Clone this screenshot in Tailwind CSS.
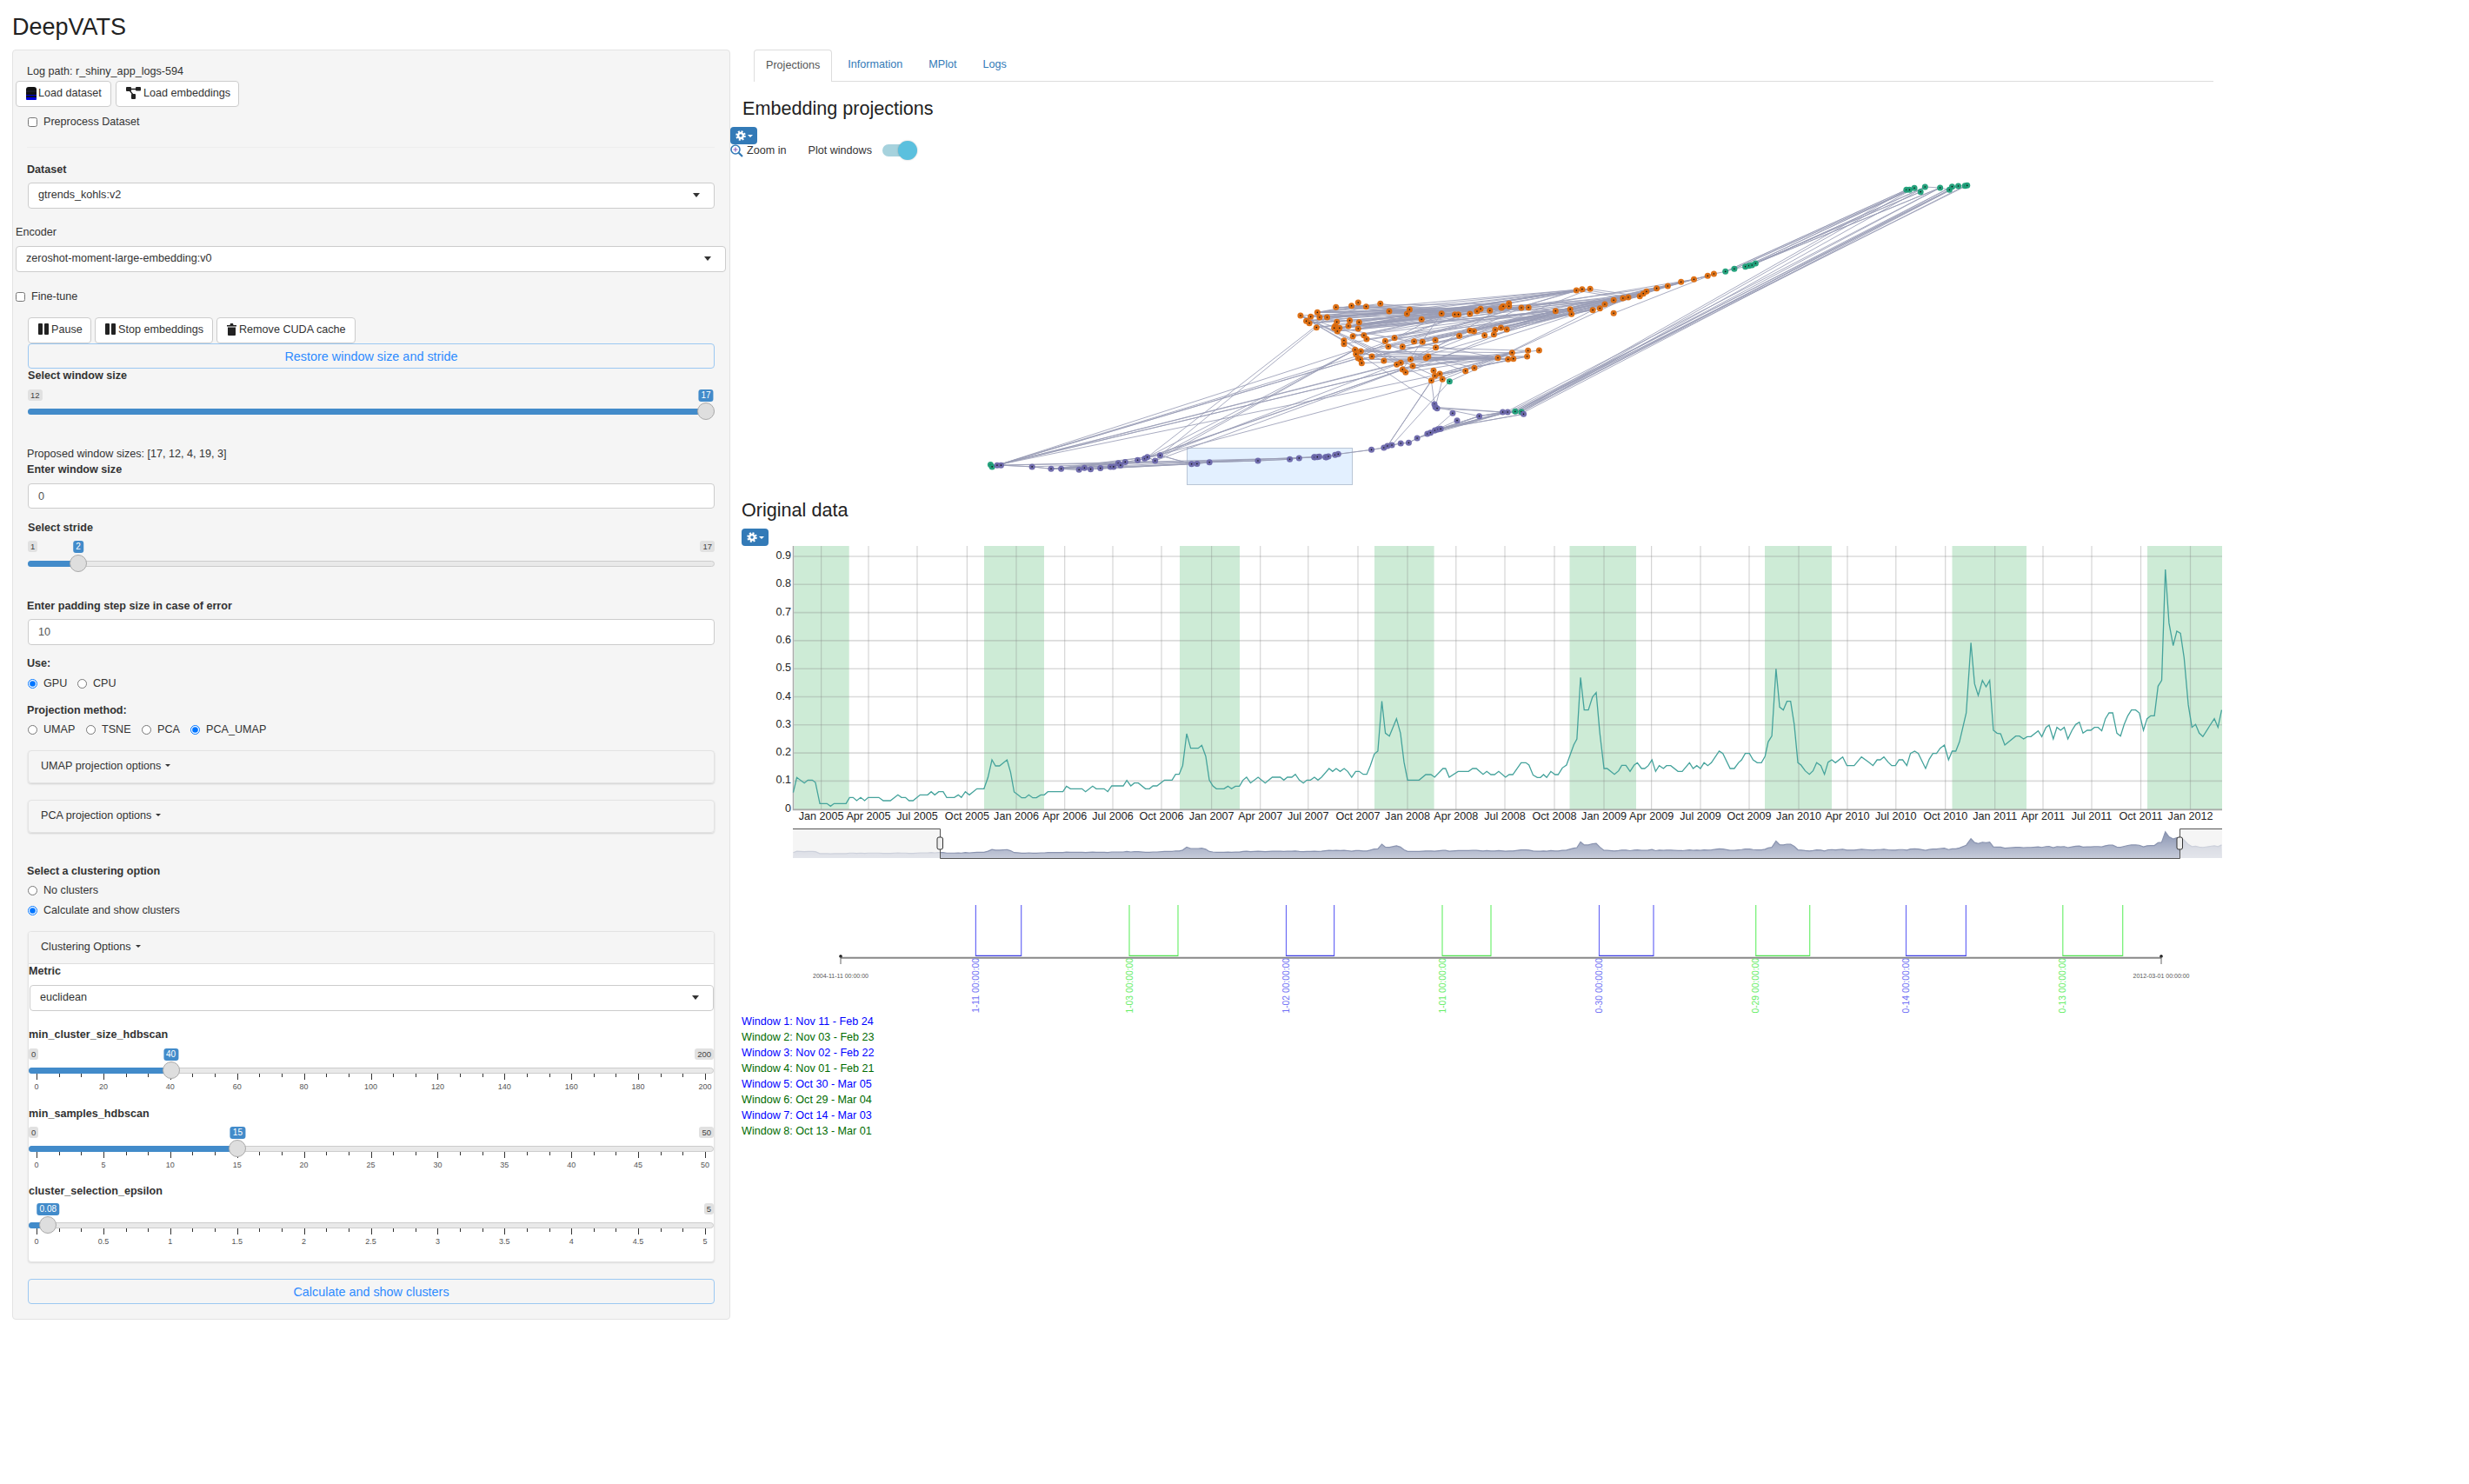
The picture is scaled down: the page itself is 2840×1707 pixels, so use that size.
<!DOCTYPE html>
<html lang="en">
<head>
  <meta charset="UTF-8" />
  <title>DeepVATS</title>
  <script src="https://cdn.jsdelivr.net/npm/@tailwindcss/browser@4"></script>
</head>
<body class="bg-white text-[#333] text-[12.6px] leading-[16px] [font-family:'Liberation_Sans',sans-serif]">
  <h2 class="h-[57px] pl-[14px] pt-[16px] text-[27px] leading-[30px] text-[#222]">DeepVATS</h2>

  <div class="flex items-start">
    <!-- sidebar -->
    <aside class="ml-[14px] h-[1461px] w-[826px] shrink-0 rounded border border-[#e3e3e3] bg-[#f5f5f5]">
      <div class="ml-[16px] mt-[16px] h-[16px]">Log path: r_shiny_app_logs-594</div>
      <div class="ml-[3px] mt-[3px] flex gap-[5px]">
        <button class="flex h-[30px] w-[110px] items-center gap-[2px] rounded border border-[#ccc] bg-white pb-[2px] pl-[11px]">
          <svg width="12" height="15" viewBox="0 0 12 15"><rect y="0" width="12" height="15" rx="3" fill="#111"/><rect y="4.5" width="12" height="1" fill="#224"/><rect y="9" width="12" height="1.2" fill="#00c"/><rect y="12" width="12" height="3" rx="1" fill="#00d"/></svg>
          Load dataset
        </button>
        <button class="flex h-[30px] w-[142px] items-center gap-[3px] rounded border border-[#ccc] bg-white pb-[2px] pl-[11px]">
          <svg width="17" height="14" viewBox="0 0 17 14"><path d="M3 2.5H13M3 2.5L8 9" stroke="#222" stroke-width="1.3" fill="none"/><rect width="6" height="5" rx="1" fill="#222"/><rect x="11" width="6" height="4.5" rx="1" fill="#222"/><rect x="6" y="8" width="5" height="6" rx="1" fill="#222"/></svg>
          Load embeddings
        </button>
      </div>
      <label class="ml-[17px] mt-[9px] flex h-[16px] items-center gap-[7px]"><input type="checkbox" class="h-[11px] w-[11px]" />Preprocess Dataset</label>
      <hr class="ml-[16px] mt-[21px] w-[791px] border-[#eee]" />

      <div class="ml-[16px] mt-[17px] h-[16px] font-bold">Dataset</div>
      <div class="ml-[17px] mt-[7px] flex h-[30px] w-[790px] items-center justify-between rounded border border-[#ccc] bg-white pb-[2px] pl-[11px] pr-[16px]">gtrends_kohls:v2<span class="h-0 w-0 border-x-4 border-t-[5px] border-x-transparent border-t-[#333]"></span></div>

      <div class="ml-[3px] mt-[19px] h-[16px]">Encoder</div>
      <div class="ml-[3px] mt-[8px] flex h-[30px] w-[817px] items-center justify-between rounded border border-[#ccc] bg-white pb-[2px] pl-[11px] pr-[16px]">zeroshot-moment-large-embedding:v0<span class="h-0 w-0 border-x-4 border-t-[5px] border-x-transparent border-t-[#333]"></span></div>

      <label class="ml-[3px] mt-[20px] flex h-[16px] items-center gap-[7px]"><input type="checkbox" class="h-[11px] w-[11px]" />Fine-tune</label>

      <div class="ml-[17px] mt-[16px] flex gap-[4px]">
        <button class="flex h-[30px] w-[73px] items-center gap-[3px] rounded border border-[#ccc] bg-white pb-[3px] pl-[11px]">
          <svg width="12" height="13" viewBox="0 0 12 13"><rect width="5" height="13" rx="1" fill="#222"/><rect x="7" width="5" height="13" rx="1" fill="#222"/></svg>
          Pause
        </button>
        <button class="flex h-[30px] w-[136px] items-center gap-[3px] rounded border border-[#ccc] bg-white pb-[3px] pl-[11px]">
          <svg width="12" height="13" viewBox="0 0 12 13"><rect width="5" height="13" rx="1" fill="#222"/><rect x="7" width="5" height="13" rx="1" fill="#222"/></svg>
          Stop embeddings
        </button>
        <button class="flex h-[30px] w-[160px] items-center gap-[3px] rounded border border-[#ccc] bg-white pb-[3px] pl-[11px]">
          <svg width="11" height="14" viewBox="0 0 11 14"><path d="M0 2H3.5L4 0H7L7.5 2H11V3.5H0Z" fill="#222"/><path d="M1 4.5H10V13A1 1 0 0 1 9 14H2A1 1 0 0 1 1 13Z" fill="#222"/></svg>
          Remove CUDA cache
        </button>
      </div>
      <button class="ml-[17px] block h-[29px] w-[790px] rounded border border-[#9cc8f2] text-[14.4px] text-[#2e8bff]">Restore window size and stride</button>
      <div class="ml-[17px] h-[16px] font-bold">Select window size</div>

      <div class="slider ml-[17px] mt-[8px] h-[66px] w-[790px]" data-w="790" data-min="12" data-max="17" data-value="17" data-pct="1" data-hide-hi="1"></div>
      <div class="ml-[16px] h-[16px]">Proposed window sizes: [17, 12, 4, 19, 3]</div>
      <div class="ml-[16px] mt-[2px] h-[16px] font-bold">Enter window size</div>
      <input class="ml-[17px] mt-[8px] block h-[29px] w-[790px] rounded border border-[#ccc] bg-white pl-[11px] text-[#555]" value="0" />

      <div class="ml-[17px] mt-[14px] h-[16px] font-bold">Select stride</div>
      <div class="slider ml-[17px] mt-[7px] h-[67px] w-[790px]" data-w="790" data-min="1" data-max="17" data-value="2" data-pct="0.0625" data-track="23"></div>
      <div class="ml-[16px] h-[16px] font-bold">Enter padding step size in case of error</div>
      <input class="ml-[17px] mt-[7px] block h-[30px] w-[790px] rounded border border-[#ccc] bg-white pl-[11px] text-[#555]" value="10" />

      <div class="ml-[16px] mt-[13px] h-[16px] font-bold">Use:</div>
      <div class="ml-[17px] mt-[7px] flex h-[16px] items-center">
        <label class="flex w-[57px] items-center gap-[7px]"><input type="radio" name="use" checked class="h-[11px] w-[11px]" />GPU</label>
        <label class="flex items-center gap-[7px]"><input type="radio" name="use" class="h-[11px] w-[11px]" />CPU</label>
      </div>
      <div class="ml-[16px] mt-[15px] h-[16px] font-bold">Projection method:</div>
      <div class="ml-[17px] mt-[6px] flex h-[16px] items-center">
        <label class="flex w-[67px] items-center gap-[7px]"><input type="radio" name="proj" class="h-[11px] w-[11px]" />UMAP</label>
        <label class="flex w-[64px] items-center gap-[7px]"><input type="radio" name="proj" class="h-[11px] w-[11px]" />TSNE</label>
        <label class="flex w-[56px] items-center gap-[7px]"><input type="radio" name="proj" class="h-[11px] w-[11px]" />PCA</label>
        <label class="flex items-center gap-[7px]"><input type="radio" name="proj" checked class="h-[11px] w-[11px]" />PCA_UMAP</label>
      </div>

      <div class="ml-[17px] mt-[16px] flex h-[38px] w-[790px] items-center gap-[5px] rounded border border-[#e3e3e3] pb-[3px] pl-[14px] shadow-[0_1px_2px_rgba(0,0,0,0.15)]">UMAP projection options<span class="h-0 w-0 border-x-[3px] border-t-[3px] border-x-transparent border-t-[#333]"></span></div>
      <div class="ml-[17px] mt-[19px] flex h-[38px] w-[790px] items-center gap-[5px] rounded border border-[#e3e3e3] pb-[3px] pl-[14px] shadow-[0_1px_2px_rgba(0,0,0,0.15)]">PCA projection options<span class="h-0 w-0 border-x-[3px] border-t-[3px] border-x-transparent border-t-[#333]"></span></div>

      <div class="ml-[16px] mt-[36px] h-[16px] font-bold">Select a clustering option</div>
      <label class="ml-[17px] mt-[6px] flex h-[16px] items-center gap-[7px]"><input type="radio" name="clu" class="h-[11px] w-[11px]" />No clusters</label>
      <label class="ml-[17px] mt-[7px] flex h-[16px] items-center gap-[7px]"><input type="radio" name="clu" checked class="h-[11px] w-[11px]" />Calculate and show clusters</label>

      <div class="ml-[17px] mt-[16px] h-[381px] w-[790px] overflow-hidden rounded border border-[#e3e3e3] bg-white shadow-[0_1px_2px_rgba(0,0,0,0.1)]">
        <div class="flex h-[37px] items-center gap-[5px] border-b border-[#ddd] bg-[#f5f5f5] pb-[3px] pl-[14px]">Clustering Options<span class="h-0 w-0 border-x-[3px] border-t-[3px] border-x-transparent border-t-[#333]"></span></div>
        <div class="h-[16px] font-bold">Metric</div>
        <div class="ml-px mt-[8px] flex h-[30px] w-[787px] items-center justify-between rounded border border-[#ccc] bg-white pb-[2px] pl-[11px] pr-[16px]">euclidean<span class="h-0 w-0 border-x-4 border-t-[5px] border-x-transparent border-t-[#333]"></span></div>
        <div class="mt-[19px] h-[16px] font-bold">min_cluster_size_hdbscan</div>
        <div class="slider mt-[8px] h-[67px] w-[788px]" data-w="788" data-min="0" data-max="200" data-value="40" data-pct="0.2" data-step="20"></div>
        <div class="h-[16px] font-bold">min_samples_hdbscan</div>
        <div class="slider mt-[7px] h-[66px] w-[788px]" data-w="788" data-min="0" data-max="50" data-value="15" data-pct="0.3" data-step="5"></div>
        <div class="h-[16px] font-bold">cluster_selection_epsilon</div>
        <div class="slider mt-[6px] h-[60px] w-[788px]" data-w="788" data-min="0" data-max="5" data-value="0.08" data-pct="0.016" data-step="0.5" data-hide-lo="1"></div>
      </div>
      <button class="ml-[17px] mt-[19px] block h-[29px] w-[790px] rounded border border-[#9cc8f2] text-[14.4px] text-[#2e8bff]">Calculate and show clusters</button>
    </aside>

    <!-- main -->
    <main class="w-[1720px]">
      <ul class="ml-[27px] flex h-[37px] w-[1679px] gap-[2px] border-b border-[#ddd]">
        <li class="h-[37px] rounded-t border-x border-t border-[#ddd] bg-white px-[13px] pt-[9px] text-[#555]">Projections</li>
        <li class="ml-[2px] px-[14px] pt-[9px] text-[#337ab7]">Information</li>
        <li class="px-[14px] pt-[9px] text-[#337ab7]">MPlot</li>
        <li class="px-[14px] pt-[9px] text-[#337ab7]">Logs</li>
      </ul>

      <h3 class="ml-[14px] mt-[16px] h-[30px] text-[21.6px] leading-[30px] text-[#222]">Embedding projections</h3>
      <button class="mt-[6px] flex h-[20px] w-[31px] items-center justify-center gap-[2px] rounded-sm bg-[#337ab7]">
        <svg width="12" height="12" viewBox="0 0 12 12"><circle cx="6" cy="6" r="4.2" fill="#fff"/><circle cx="6" cy="6" r="4.8" fill="none" stroke="#fff" stroke-width="2" stroke-dasharray="2 1.77"/><circle cx="6" cy="6" r="1.7" fill="#337ab7"/></svg>
        <span class="h-0 w-0 border-x-[3px] border-t-[3px] border-x-transparent border-t-white"></span>
      </button>
      <div class="-mt-px flex h-[16px] items-center">
        <svg width="15" height="15" viewBox="0 0 15 15" class="shrink-0"><circle cx="6" cy="6" r="5" fill="#fff" stroke="#337ab7" stroke-width="1.6"/><path d="M9.7 9.7L14 14" stroke="#337ab7" stroke-width="2.2"/><path d="M3.5 6H8.5M6 3.5V8.5" stroke="#8a5fc0" stroke-width="1.2"/></svg>
        <span class="ml-[4px]">Zoom in</span>
        <span class="ml-[25px]">Plot windows</span>
        <span class="relative ml-[12px] block h-[14px] w-[30px] rounded-full bg-[#a6d2dd]">
          <span class="absolute left-[18px] top-[-4px] h-[22px] w-[22px] rounded-full bg-[#5bc0de] shadow-[0_0_2px_rgba(0,0,0,0.25)]"></span>
        </span>
      </div>
      <svg id="scatter" width="1720" height="389" viewBox="840 181 1720 389" class="block"></svg>

      <h3 class="ml-[13px] mt-[2px] h-[30px] text-[21.6px] leading-[30px] text-[#222]">Original data</h3>
      <button class="ml-[13px] mt-[6px] flex h-[20px] w-[31px] items-center justify-center gap-[2px] rounded-sm bg-[#337ab7]">
        <svg width="12" height="12" viewBox="0 0 12 12"><circle cx="6" cy="6" r="4.2" fill="#fff"/><circle cx="6" cy="6" r="4.8" fill="none" stroke="#fff" stroke-width="2" stroke-dasharray="2 1.77"/><circle cx="6" cy="6" r="1.7" fill="#337ab7"/></svg>
        <span class="h-0 w-0 border-x-[3px] border-t-[3px] border-x-transparent border-t-white"></span>
      </button>
      <svg id="chart" width="1720" height="362" viewBox="840 628 1720 362" class="block"></svg>

      <svg id="timeline" width="1720" height="124" viewBox="840 1041 1720 124" class="mt-[51px] block overflow-hidden"></svg>
      <div id="windows" class="ml-[13px] mt-px leading-[18px]"></div>
    </main>
  </div>

  <script>
    // sliders
    document.querySelectorAll('.slider').forEach(el => {
      const d = el.dataset;
      const w = Number(d.w);
      const cx = 10 + d.pct * (w - 20);
      const top = Number(d.track || 22);
      let html = '';
      if (!d.hideLo) html += `<span class="absolute left-0 top-0 rounded-[3px] bg-[#e1e1e1] px-[3px] text-[9.5px] leading-[13px] text-[#444]">${d.min}</span>`;
      if (!d.hideHi) html += `<span class="absolute right-0 top-0 rounded-[3px] bg-[#e1e1e1] px-[3px] text-[9.5px] leading-[13px] text-[#444]">${d.max}</span>`;
      html += `<span class="absolute top-0 z-10 -translate-x-1/2 rounded-[3px] bg-[#428bca] px-[3px] text-[10px] leading-[14px] text-white" style="left:${cx}px">${d.value}</span>`;
      html += `<span class="absolute inset-x-0 h-[7px] rounded border border-[#ccc] bg-[#e9e9e9]" style="top:${top}px"></span>`;
      html += `<span class="absolute left-0 h-[7px] rounded-l bg-[#428bca]" style="top:${top}px;width:${cx}px"></span>`;
      html += `<span class="absolute z-10 h-[20px] w-[20px] -translate-x-1/2 rounded-full border border-[#aaa] bg-[#dedede]" style="left:${cx}px;top:${top - 7}px"></span>`;
      if (d.step) {
        const n = 10;
        for (let i = 0; i <= n * 3; i++) {
          const x = 9 + i / (n * 3) * (w - 19);
          const major = i % 3 === 0;
          html += `<span class="absolute w-px bg-[#333]" style="left:${x}px;top:${top + 7}px;height:${major ? 7 : 4}px"></span>`;
          if (major) {
            const v = Math.round(i / 3 * d.step * 10) / 10;
            html += `<span class="absolute -translate-x-1/2 text-[9px] leading-[10px] text-[#555]" style="left:${x}px;top:${top + 17}px">${v}</span>`;
          }
        }
      }
      el.classList.add('relative');
      el.innerHTML = html;
    });

    // embedding projection
    const z5 = ([x, y]) => [1500 + x / 1.96, 180 + y / 3];
    const z4 = ([x, y]) => [830 + x / 2.24, 30 + y / 2.904];
    const orange = [[15,553],[30,538],[35,555],[52,555],[5,568],[12,575],[28,590],[72,520],[107,515],[122,504],[140,518],[172,508],[192,534],[238,528],[232,543],[265,562],[310,542],[340,545],[348,545],[374,543],[390,534],[398,526],[419,532],[445,522],[449,517],[462,507],[462,517],[490,522],[506,521],[614,462],[627,458],[645,457],[567,533],[600,527],[603,544],[651,530],[667,524],[678,510],[698,496],[719,489],[731,486],[757,482],[765,473],[772,466],[795,455],[820,447],[850,433],[879,424],[910,412],[924,405],[698,541],[74,571],[103,566],[124,572],[70,585],[68,592],[80,592],[75,603],[100,585],[122,594],[110,620],[135,617],[141,630],[90,635],[90,647],[183,637],[204,626],[190,656],[222,656],[248,638],[267,640],[296,634],[297,659],[350,619],[374,601],[383,603],[407,617],[428,614],[431,598],[444,591],[457,597],[115,667],[128,672],[117,682],[122,696],[127,700],[130,713],[153,690],[180,705],[209,718],[218,712],[240,700],[245,723],[222,735],[229,745],[275,695],[280,690],[292,739],[295,757],[306,750],[312,769],[287,773],[364,740],[384,730],[437,695],[469,677],[460,700],[472,698],[503,690],[505,670],[530,669],[-8,549]].map(z5);
    const tealTop = [[1358,115],[1365,115],[1376,109],[1390,122],[1400,105],[1434,108],[1455,115],[1461,104],[1475,102],[1490,101],[1495,100]].map(z5);
    const tealMid = [[950,397],[970,388],[995,380],[1003,377],[1010,375],[1018,369]].map(z5);
    const tealLow = [[328,776],[476,880],[490,881]].map(z5);
    const tealLeft = [[693,1465],[697,1472]].map(z4);
    const purpleA = [[710,1467],[720,1467],[800,1472],[849,1479],[875,1479],[921,1482],[935,1476],[951,1480],[976,1477],[1002,1472],[1010,1472],[1022,1460],[1028,1467],[1040,1456],[1072,1450],[1090,1445],[1097,1440],[1117,1452],[1130,1434],[1211,1463],[1225,1462],[1257,1457],[1382,1452],[1464,1447],[1488,1443],[1527,1440],[1540,1438],[1556,1440]].map(z4);
    const purpleB = [[24,1038],[30,1037],[50,1038],[55,1035],[70,1030],[77,1027],[152,1012],[180,1005],[188,999],[198,996],[218,990],[236,988],[255,972],[278,957],[285,953],[295,945],[302,941],[308,940],[395,896],[448,882],[459,882],[495,889]].map(z5);
    const purpleC = [[294,855],[296,865],[300,869],[335,886],[345,911]].map(z5);
    const purple = [...purpleA, ...purpleB, ...purpleC];

    let seed = 7;
    const rnd = n => { seed = (seed * 1103515245 + 12345) % 2147483648; return (seed >> 8) % n; };
    const lines = [];
    const seg = (a, b) => lines.push([a, b]);

    // long bands between the top teal group and the rest
    for (let i = 0; i < 12; i++) seg(tealTop[i % 6], tealMid[i % tealMid.length]);
    for (let i = 0; i < 10; i++) seg(tealTop[5 + i % 6], [1736 + i * 1.5, 472 + i % 5]);
    for (let i = 0; i < 3; i++) seg(tealTop[i * 2], [1742 + i * 3, 475]);
    for (let i = 0; i < tealTop.length - 1; i++) seg(tealTop[i], tealTop[i + 1]);

    // purple path along the bottom
    const chain = [...tealLeft, ...purple.slice(0, 50)];
    for (let i = 0; i < chain.length - 1; i++) { seg(chain[i], chain[i + 1]); seg(chain[i], chain[i + 1]); }
    for (let i = 0; i < 16; i++) seg(purpleA[rnd(8)], purpleA[10 + rnd(18)]);
    for (let i = 0; i < 10; i++) seg(purpleB[10 + rnd(9)], purpleB[17 + rnd(5)]);
    seg(purpleC[1], purpleB[19]); seg(purpleC[2], purpleB[19]); seg(purpleC[3], purpleB[14]); seg(purpleC[4], purpleB[15]);

    // left fan up to the orange cloud
    const fanFrom = [z4([715,1465]), z4([715,1465]), z4([715,1465]), z4([1097,1440]), z4([1130,1434]), z4([1117,1452]), z4([1090,1445])];
    const midOrange = orange.filter(p => p[1] > 395 && p[1] < 430);
    for (let i = 0; i < 9; i++) seg(fanFrom[i % 3], midOrange[rnd(midOrange.length)]);
    for (let i = 0; i < 8; i++) seg(fanFrom[3 + i % 4], orange[81 + rnd(20)]);
    seg(fanFrom[3], orange[3]); seg(fanFrom[4], orange[6]);

    // orange cloud
    const left = orange.filter(p => p[0] < 1640);
    const right = orange.filter(p => p[0] >= 1640 && p[0] < 1900 && p[1] < 365);
    for (let i = 0; i < 42; i++) seg(left[rnd(left.length)], right[rnd(right.length)]);
    for (let i = 0; i < 24; i++) seg(orange[rnd(9)], orange[7 + rnd(25)]);
    for (let i = 0; i < 30; i++) seg(orange[51 + rnd(30)], orange[29 + rnd(20)]);
    for (let i = 0; i < 30; i++) seg(orange[81 + rnd(22)], orange[103 + rnd(9)]);
    for (let i = 0; i < 14; i++) seg(orange[rnd(orange.length)], orange[rnd(orange.length)]);
    for (let i = 38; i < 50; i++) { seg(orange[i], orange[i + 1]); seg(orange[i], orange[i - 10]); }
    seg(orange[49], tealMid[0]); seg(tealMid[0], tealMid[1]); seg(tealMid[1], tealMid[2]);
    seg(orange[101], purpleC[0]); seg(orange[101], purpleB[8]); seg(orange[98], purpleB[8]);
    seg(tealLow[0], purpleB[9]); seg(orange[99], tealLow[0]); seg(orange[64], purpleC[0]);
    seg(purpleC[1], purpleB[18]); seg(orange[100], purpleC[1]); seg(tealLow[0], orange[105]);
    seg(purpleB[19], tealLow[1]); seg(tealLow[1], tealLow[2]);

    let s = `<rect x="1365.5" y="515.5" width="190" height="42" fill="#e3f0ff" stroke="#b9c5d5"/>`;
    s += lines.map(([a, b]) => `<line x1="${a[0]}" y1="${a[1]}" x2="${b[0]}" y2="${b[1]}" stroke="#9a9eb6" stroke-opacity=".85"/>`).join('');
    const dots = (arr, col) => arr.map(p => `<circle cx="${p[0]}" cy="${p[1]}" r="3.5" fill="${col}" fill-opacity=".95"/><circle cx="${p[0]}" cy="${p[1]}" r=".8" fill="#111"/>`).join('');
    s += dots(orange, '#dc6a0c') + dots([...tealTop, ...tealMid, ...tealLow, ...tealLeft], '#1b9e77') + dots(purple, '#6a66aa');
    document.getElementById('scatter').innerHTML = s;

    // original data
    const trace6 = [142,1055,150,1003,167,1022,175,1012,185,1012,192,1020,202,1093,218,1093,226,1102,234,1093,261,1093,269,1072,277,1072,285,1083,294,1072,303,1083,311,1072,335,1072,345,1083,361,1083,378,1063,386,1072,395,1072,403,1083,412,1083,428,1063,445,1063,453,1052,461,1063,470,1052,480,1052,488,1072,505,1072,514,1063,521,1072,530,1052,539,1063,556,1042,572,1042,581,1003,590,942,598,963,607,963,624,942,632,985,640,1053,648,1062,657,1073,665,1073,673,1063,682,1073,690,1073,700,1063,708,1063,716,1052,750,1052,758,1033,767,1042,793,1042,801,1052,817,1033,825,1042,843,1042,851,1052,860,1032,886,1032,894,1013,903,1032,911,1022,920,1022,936,1042,945,1042,953,1032,962,1032,979,1012,996,1012,1004,992,1012,992,1020,962,1029,852,1038,902,1055,902,1063,892,1072,930,1080,1012,1088,1032,1096,1042,1113,1042,1122,1033,1130,1042,1139,1033,1148,1033,1156,1012,1164,1002,1173,1022,1190,1002,1206,1022,1222,1002,1240,1002,1248,1012,1256,1002,1266,1002,1274,992,1283,1012,1292,1022,1300,1012,1308,1012,1317,1002,1325,1012,1333,1002,1350,972,1358,982,1366,972,1375,982,1384,972,1392,982,1401,1002,1410,982,1418,982,1427,992,1435,992,1443,962,1452,922,1460,912,1469,740,1477,850,1486,860,1502,800,1511,850,1519,950,1527,1012,1553,1012];
    const trace7 = [0,873,10,873,17,882,33,852,38,852,45,882,62,862,82,862,90,852,97,852,110,872,117,862,125,873,132,873,140,862,153,882,160,873,167,873,183,832,192,832,198,840,206,875,214,883,220,883,226,873,232,883,240,862,248,873,254,873,262,850,270,840,276,810,284,770,290,750,297,538,304,650,312,650,320,605,327,590,334,730,342,852,348,852,362,872,370,860,376,841,384,841,392,862,400,840,406,832,414,852,420,852,427,842,434,822,441,862,448,842,456,852,462,842,470,842,484,862,492,862,506,832,513,852,520,842,527,852,534,832,541,842,548,832,563,792,570,800,584,852,592,852,600,832,606,822,613,800,621,800,628,822,636,832,644,832,651,810,657,760,664,740,672,508,679,640,686,650,693,620,700,620,707,700,714,832,720,840,728,860,736,872,743,860,750,832,758,842,765,872,772,830,779,822,786,832,800,812,808,842,822,842,836,812,850,830,858,842,866,822,872,822,879,812,887,830,894,842,901,842,908,822,915,822,923,842,930,800,938,792,945,800,959,852,966,820,973,800,980,800,987,782,995,771,1003,822,1010,792,1017,792,1024,760,1037,660,1046,418,1053,560,1060,600,1068,548,1075,570,1082,548,1089,720,1096,730,1103,732,1111,771,1132,740,1139,740,1147,750,1154,742,1161,742,1175,722,1182,742,1190,710,1196,702,1204,750,1211,710,1218,720,1225,710,1232,750,1240,720,1247,700,1254,692,1261,730,1269,720,1276,720,1283,710,1290,710,1297,722,1304,680,1311,660,1318,660,1326,730,1333,740,1340,700,1347,670,1354,650,1362,650,1369,660,1377,720,1384,680,1391,670,1398,670,1405,568,1412,548,1419,165,1426,350,1434,428,1441,378,1448,385,1455,470,1463,632,1470,710,1477,700,1484,730,1491,742,1505,702,1513,680,1520,710,1527,650];
    const series = [];
    for (let i = 0; i < trace6.length; i += 2) series.push([840 + trace6[i] / 1.96, 560 + trace6[i + 1] / 3]);
    for (let i = 0; i < trace7.length; i += 2) series.push([1640 + trace7[i] / 1.668, 600 + trace7[i + 1] / 3]);

    const bands = [[913.5,976.7],[1132,1201],[1357,1426],[1581,1649.6],[1805.5,1882],[2030,2107],[2245.5,2331],[2470,2556]];
    const yTicks = [0,0.1,0.2,0.3,0.4,0.5,0.6,0.7,0.8,0.9];
    const months = ['Jan','Apr','Jul','Oct'];
    const xGrid = [944.6,999,1055,1112.4,1169,1224.7,1280,1336,1393.6,1449.7,1504.8,1562,1619,1674.8,1731,1788,1845,1899.6,1956,2012,2069,2125,2180.8,2237.7,2294.7,2350,2406,2462.5,2519.5];

    let c = '<defs><linearGradient id="mini" x1="0" y1="0" x2="0" y2="1"><stop offset="0" stop-color="#8a95b2"/><stop offset="1" stop-color="#c6cbda"/></linearGradient></defs>';
    c += bands.map(b => `<rect x="${b[0]}" y="628" width="${b[1] - b[0]}" height="303" fill="#cdebd6"/>`).join('');
    xGrid.forEach((x, i) => {
      c += `<line x1="${x}" y1="628" x2="${x}" y2="931" stroke="#888" stroke-opacity=".35" stroke-width="1.2"/>`;
      c += `<text x="${x}" y="943" text-anchor="middle" font-size="12.6" fill="#222">${months[i % 4]} ${2005 + Math.floor(i / 4)}</text>`;
    });
    yTicks.forEach(v => {
      const y = 930.7 - v * 323;
      c += `<line x1="912" y1="${y}" x2="2556" y2="${y}" stroke="#888" stroke-opacity=".3" stroke-width="1.6"/>`;
      c += `<text x="910" y="${y + 3}" text-anchor="end" font-size="12.6" fill="#222">${v}</text>`;
    });
    c += '<path d="M912.5 628V931.5H2556" fill="none" stroke="#aaa" stroke-width="1.5"/>';
    c += `<polyline points="${series.map(p => p.join(',')).join(' ')}" fill="none" stroke="#45a39c" stroke-width="1.3"/>`;

    // range selector
    const mini = series.map(p => [p[0], 987 - (4.5 + (930.7 - p[1]) * 30 / 323)]);
    const miniPts = mini.map(p => p.join(',')).join(' ');
    c += '<rect x="912" y="953" width="169" height="34" fill="#f5f5f5"/><rect x="2507" y="953" width="49" height="34" fill="#f5f5f5"/>';
    c += `<polygon points="912,987 ${miniPts} 2556,987" fill="url(#mini)"/><polyline points="${miniPts}" fill="none" stroke="#8a94b0" stroke-width="1.2"/>`;
    c += '<rect x="912" y="953" width="169" height="34" fill="#f5f5f5" fill-opacity=".62"/><rect x="2507" y="953" width="49" height="34" fill="#f5f5f5" fill-opacity=".62"/>';
    c += '<path d="M912 953.5H1081.5V987.5H2507.5V953.5H2556" fill="none" stroke="#555" stroke-width="1"/>';
    c += '<rect x="1078" y="963" width="6.5" height="14" rx="2" fill="#eee" stroke="#333"/><rect x="2504" y="963" width="6.5" height="14" rx="2" fill="#eee" stroke="#333"/>';
    document.getElementById('chart').innerHTML = c;

    // plotted windows
    const wins = [
      [1122.4,1174.7,'blue','2004-11-11 00:00:00'],[1299,1355,'green','2005-11-03 00:00:00'],
      [1479.5,1534.6,'blue','2006-11-02 00:00:00'],[1659,1715,'green','2007-11-01 00:00:00'],
      [1839.5,1902,'blue','2008-10-30 00:00:00'],[2019.7,2081.7,'green','2009-10-29 00:00:00'],
      [2192.5,2261.4,'blue','2010-10-14 00:00:00'],[2372.8,2441.7,'green','2011-10-13 00:00:00']
    ];
    const palette = { blue: ['#6a6af5', '#3d3de0', '#7070f5'], green: ['#70f070', '#4fe04f', '#66ee66'] };
    let t = '<path d="M967 1101.7H2486" stroke="#888" stroke-width="2"/>';
    [[967,'2004-11-11 00:00:00'],[2486,'2012-03-01 00:00:00']].forEach(([x, label]) => {
      t += `<circle cx="${x}" cy="1100" r="1.8" fill="#111"/><line x1="${x}" y1="1100" x2="${x}" y2="1109" stroke="#666"/>`;
      t += `<text x="${x}" y="1125" text-anchor="middle" font-size="7" fill="#555">${label}</text>`;
    });
    wins.forEach(([a, b, col, label]) => {
      const [v, h, l] = palette[col];
      t += `<path d="M${a} 1041V1100M${b} 1041V1100" stroke="${v}" stroke-width="1.2" fill="none"/>`;
      t += `<path d="M${a} 1099.3H${b}" stroke="${h}" stroke-width="1.2"/>`;
      t += `<text transform="translate(${a + 3.5} 1102) rotate(-90)" text-anchor="end" font-size="10.3" fill="${l}">${label}</text>`;
    });
    document.getElementById('timeline').innerHTML = t;

    const labels = ['Nov 11 - Feb 24','Nov 03 - Feb 23','Nov 02 - Feb 22','Nov 01 - Feb 21','Oct 30 - Mar 05','Oct 29 - Mar 04','Oct 14 - Mar 03','Oct 13 - Mar 01'];
    document.getElementById('windows').innerHTML = labels.map((txt, i) =>
      `<div class="${i % 2 ? 'text-[#006b00]' : 'text-[#0000ff]'}">Window ${i + 1}: ${txt}</div>`).join('');
  </script>
</body>
</html>
